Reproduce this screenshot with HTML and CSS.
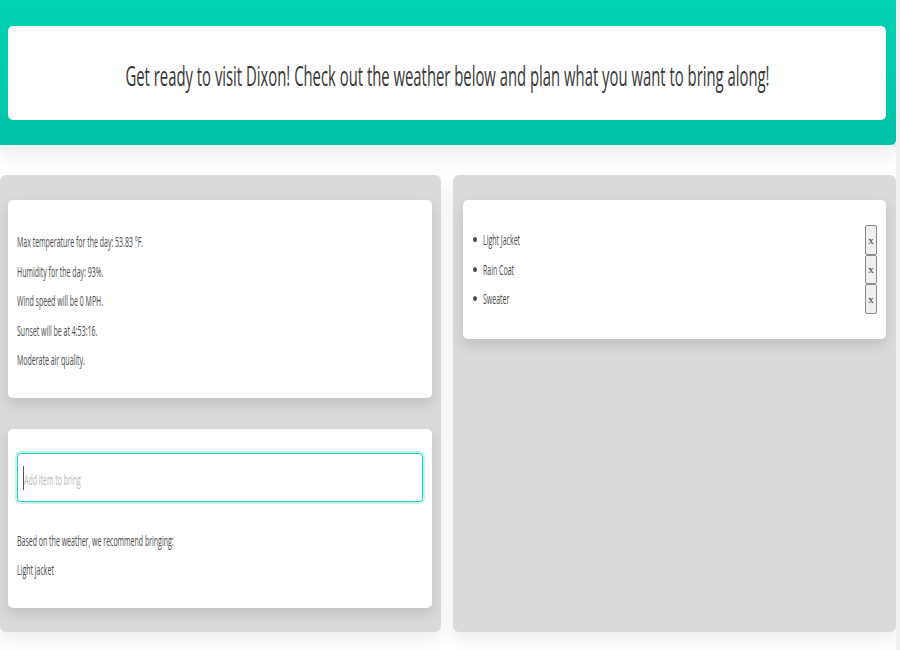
FILE: index.html
```html
<!DOCTYPE html>
<html lang="en">
<head>
<meta charset="utf-8">
<title>Trip to Dixon</title>
<link rel="stylesheet" href="styles.css">
</head>
<body>
<div class="page">
  <header class="hero">
    <div class="hero-box">
      <h1 class="title"><span class="squeeze">Get ready to visit Dixon! Check out the weather below and plan what you want to bring along!</span></h1>
    </div>
  </header>
  <main class="columns">
    <section class="column">
      <div class="box weather">
        <p class="line"><span class="squeeze">Max temperature for the day: 53.83 °F.</span></p>
        <p class="line"><span class="squeeze">Humidity for the day: 93%.</span></p>
        <p class="line"><span class="squeeze">Wind speed will be 0 MPH.</span></p>
        <p class="line"><span class="squeeze">Sunset will be at 4:53:16.</span></p>
        <p class="line"><span class="squeeze">Moderate air quality.</span></p>
      </div>
      <div class="box planner">
        <div class="input"><span class="caret"></span><span class="squeeze placeholder">Add item to bring</span></div>
        <p class="line rec"><span class="squeeze">Based on the weather, we recommend bringing:</span></p>
        <p class="line"><span class="squeeze">Light jacket</span></p>
      </div>
    </section>
    <section class="column">
      <div class="box list">
        <ul class="items">
          <li class="item"><span class="dot"></span><span class="squeeze label">Light Jacket</span><button class="remove">x</button></li>
          <li class="item"><span class="dot"></span><span class="squeeze label">Rain Coat</span><button class="remove">x</button></li>
          <li class="item"><span class="dot"></span><span class="squeeze label">Sweater</span><button class="remove">x</button></li>
        </ul>
      </div>
    </section>
  </main>
</div>
</body>
</html>
```
FILE: styles.css
```css
html, body {
  margin: 0;
  padding: 0;
  background: #f1f1f1;
}
body {
  font-family: "Open Sans", "Noto Sans", sans-serif;
  color: #4a4a4a;
}
.page {
  width: 896px;
  height: 650px;
  background: #ffffff;
  overflow: hidden;
}
.squeeze {
  display: inline-block;
  white-space: nowrap;
  transform: scaleX(0.5);
  transform-origin: left center;
}
.hero {
  background: linear-gradient(to bottom, #00d3b4, #00c2a8);
  padding: 26px 10px 25px 8px;
  border-radius: 0 0 5px 0;
  box-shadow: 0 10px 22px rgba(0, 0, 0, 0.08);
}
.hero-box {
  background: #ffffff;
  height: 94px;
  border-radius: 5px;
  display: flex;
  align-items: center;
  justify-content: center;
  overflow: hidden;
}
.title {
  margin: 4px 0 0 0;
  font-size: 27px;
  font-weight: 500;
  color: #363636;
  width: 100%;
  display: flex;
  justify-content: center;
  line-height: 1;
}
.title .squeeze {
  flex: none;
  transform-origin: center center;
  transform: scaleX(0.55);
}
.columns {
  display: flex;
  gap: 12px;
  margin-top: 30px;
  height: 457px;
}
.column {
  background: #dadada;
  border-radius: 6px;
  box-shadow: 0 8px 16px rgba(0, 0, 0, 0.07);
  padding: 25px 9px 25px 8px;
  display: flex;
  flex-direction: column;
  gap: 31px;
  box-sizing: border-box;
}
.column:first-child {
  width: 441px;
}
.column:last-child {
  width: 443px;
  padding: 25px 10px;
}
.box {
  background: #ffffff;
  border-radius: 5px;
  box-shadow: 0 6px 14px rgba(0, 0, 0, 0.12);
  padding: 0 9px;
}
.weather {
  padding-top: 27px;
  padding-bottom: 23.5px;
}
.line {
  margin: 0;
  font-size: 14px;
  line-height: 29.5px;
  height: 29.5px;
  color: #4a4a4a;
}
.planner {
  padding-top: 24px;
  padding-bottom: 23.5px;
}
.input {
  height: 49px;
  box-sizing: border-box;
  border: 1px solid #1fd8bb;
  border-radius: 4px;
  box-shadow: 0 0 0 2px rgba(0, 209, 178, 0.22);
  display: flex;
  align-items: center;
  padding-left: 5px;
  padding-top: 4px;
  margin-bottom: 23.5px;
}
.caret {
  width: 1px;
  height: 24px;
  background: #555;
  margin-top: -3px;
}
.placeholder {
  font-size: 14px;
  color: #b9b9b9;
}
.list {
  padding: 25px 9px 25.5px 9px;
}
.items {
  list-style: none;
  margin: 0;
  padding: 0;
}
.item {
  display: flex;
  align-items: center;
  height: 29.5px;
  font-size: 14px;
}
.dot {
  width: 4px;
  height: 5px;
  border-radius: 50%;
  background: #4a4a4a;
  margin-left: 1px;
  margin-right: 6px;
  flex: none;
}
.label {
  flex: 1;
  color: #4a4a4a;
}
.remove {
  width: 12px;
  height: 29.5px;
  padding: 0;
  margin: 0 0 0 auto;
  border: 1px solid #8a8a8a;
  border-radius: 2px;
  background: #efefef;
  font-family: "Liberation Serif", serif;
  font-size: 11px;
  color: #333;
  flex: none;
}
```
